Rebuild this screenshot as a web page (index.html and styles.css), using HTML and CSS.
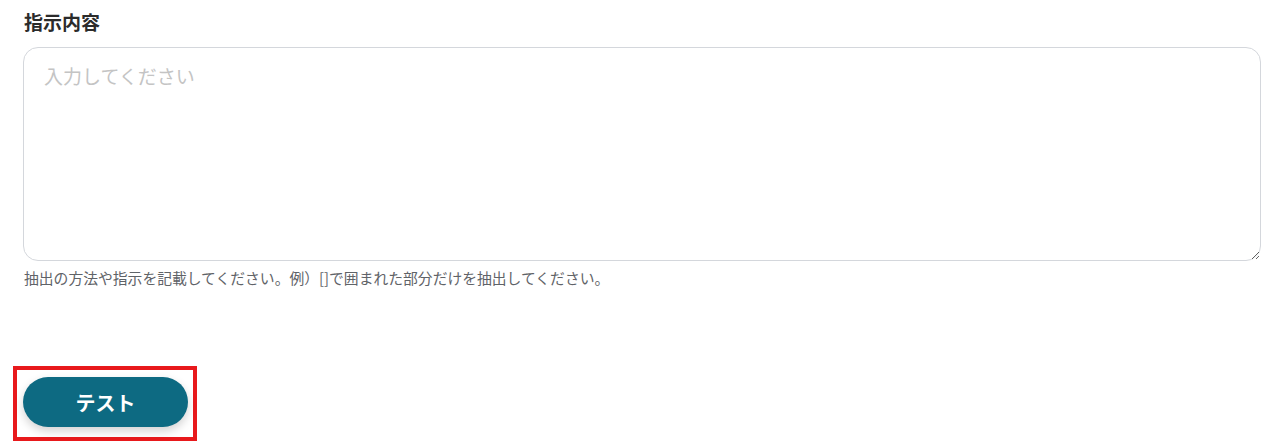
FILE: index.html
```html
<!DOCTYPE html>
<html lang="ja">
<head>
<meta charset="utf-8">
<link rel="stylesheet" href="styles.css">
</head>
<body>
<div class="page">
  <div class="field">
    <label class="label" for="inst">指示内容</label>
    <textarea id="inst" class="textarea" placeholder="入力してください"></textarea>
    <p class="hint">抽出の方法や指示を記載してください。例）[]で囲まれた部分だけを抽出してください。</p>
  </div>
  <div class="actions">
    <div class="highlight">
      <button class="btn" type="button">テスト</button>
    </div>
  </div>
</div>
</body>
</html>
```
FILE: styles.css
```css
html, body {
  margin: 0;
  padding: 0;
  background: #ffffff;
}
body {
  font-family: "Noto Sans CJK JP", "Noto Sans", sans-serif;
  color: #333;
}
.page {
  padding: 8px 17px 0 23px;
}
.field {
  display: flex;
  flex-direction: column;
}
.label {
  font-size: 19px;
  font-weight: 700;
  line-height: 28px;
  color: #2b2b2b;
  padding-left: 1px;
}
.textarea {
  box-sizing: border-box;
  margin-top: 11px;
  width: 1238px;
  height: 214px;
  border: 1px solid #d4d7dc;
  border-radius: 15px;
  padding: 14px 20px;
  font-family: inherit;
  font-size: 19px;
  line-height: 28px;
  color: #333;
  outline: none;
  resize: vertical;
}
.textarea::placeholder {
  color: #c4c4c4;
}
.hint {
  margin: 6px 0 0 1px;
  font-size: 14.8px;
  line-height: 22px;
  color: #5f6368;
}
.actions {
  display: flex;
  margin-top: 77px;
  margin-left: -10px;
}
.highlight {
  border: 4px solid #e8191c;
  padding: 7px 5px 10px 6px;
}
.btn {
  width: 165px;
  height: 50px;
  border: none;
  border-radius: 25px;
  background: #0d6a82;
  color: #fff;
  font-family: inherit;
  font-size: 20px;
  font-weight: 700;
  box-shadow: 0 4px 10px rgba(0, 0, 0, 0.18);
  cursor: pointer;
}
```
